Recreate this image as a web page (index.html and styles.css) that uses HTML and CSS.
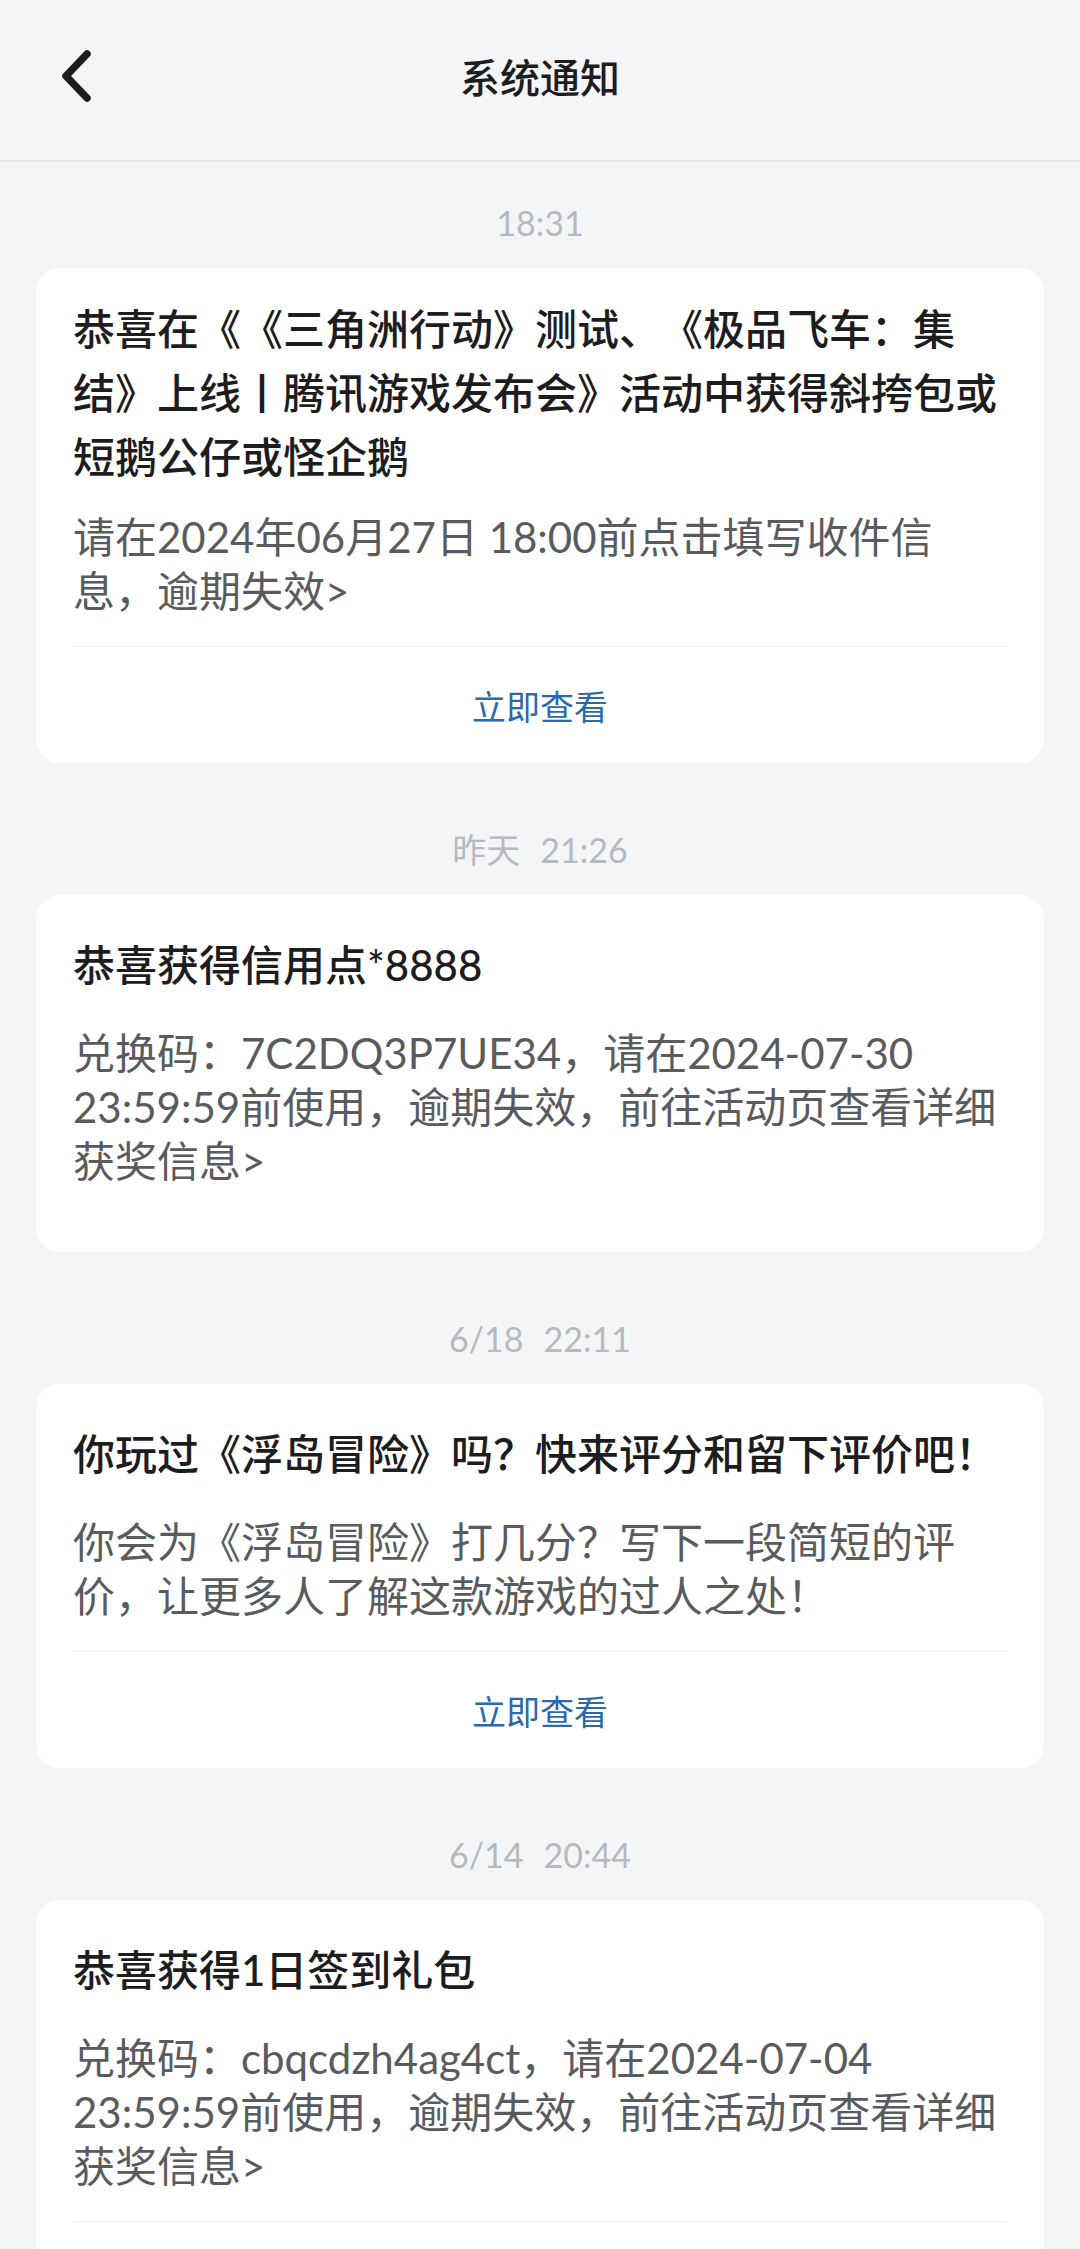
FILE: index.html
```html
<!DOCTYPE html>
<html lang="zh-CN">
<head>
<meta charset="utf-8">
<title>系统通知</title>
<link rel="stylesheet" href="styles.css">
</head>
<body>
<header class="nav">
  <div class="nav-side">
    <svg class="back" width="40" height="60" viewBox="0 0 40 60" aria-hidden="true">
      <path d="M31 8 L10 30 L31 52" fill="none" stroke="#1c1c1e" stroke-width="7.5" stroke-linecap="round" stroke-linejoin="round"/>
    </svg>
  </div>
  <h1 class="nav-title">系统通知</h1>
  <div class="nav-side"></div>
</header>

<main class="list">
  <section class="group">
    <div class="time"><span>18:31</span></div>
    <article class="card card--tight">
      <h2 class="card-title">恭喜在《《三角洲行动》测试、《极品飞车：集结》上线丨腾讯游戏发布会》活动中获得斜挎包或短鹅公仔或怪企鹅</h2>
      <p class="card-text">请在2024年06月27日 18:00前点击填写收件信息，逾期失效&gt;</p>
      <div class="card-action">立即查看</div>
    </article>
  </section>

  <section class="group">
    <div class="time"><span>昨天</span><span>21:26</span></div>
    <article class="card card--plain">
      <h2 class="card-title">恭喜获得信用点*8888</h2>
      <p class="card-text">兑换码：7C2DQ3P7UE34，请在2024-07-30 23:59:59前使用，逾期失效，前往活动页查看详细获奖信息&gt;</p>
    </article>
  </section>

  <section class="group">
    <div class="time"><span>6/18</span><span>22:11</span></div>
    <article class="card">
      <h2 class="card-title">你玩过《浮岛冒险》吗？快来评分和留下评价吧！</h2>
      <p class="card-text">你会为《浮岛冒险》打几分？写下一段简短的评价，让更多人了解这款游戏的过人之处！</p>
      <div class="card-action">立即查看</div>
    </article>
  </section>

  <section class="group">
    <div class="time"><span>6/14</span><span>20:44</span></div>
    <article class="card">
      <h2 class="card-title">恭喜获得1日签到礼包</h2>
      <p class="card-text">兑换码：cbqcdzh4ag4ct，请在2024-07-04 23:59:59前使用，逾期失效，前往活动页查看详细获奖信息&gt;</p>
      <div class="card-action">立即查看</div>
    </article>
  </section>
</main>
</body>
</html>
```

FILE: styles.css
```css
* {
  box-sizing: border-box;
}

html, body {
  margin: 0;
  padding: 0;
}

body {
  background: #f4f5f7;
  font-family: "Lato", "Noto Sans CJK SC", sans-serif;
  color: #1d1d1f;
  min-height: 2249px;
  text-spacing-trim: space-all;
}

.nav {
  display: grid;
  grid-template-columns: 1fr auto 1fr;
  align-items: center;
  height: 162px;
  padding-bottom: 8px;
  border-bottom: 2px solid #e4e5e8;
  background: #f4f5f7;
}

.nav-side {
  display: flex;
  align-items: center;
}

.back {
  display: block;
  margin-left: 56px;
}

.nav-title {
  margin: 0;
  font-family: "Noto Sans CJK SC", sans-serif;
  font-size: 40px;
  font-weight: 500;
  line-height: 56px;
  color: #1d1d1f;
}

.list {
  padding: 36px 36px 0;
  display: flex;
  flex-direction: column;
  gap: 62px;
}

.group {
  display: flex;
  flex-direction: column;
  gap: 20px;
}

.time {
  display: flex;
  justify-content: center;
  gap: 20px;
  height: 50px;
  line-height: 50px;
  font-size: 34px;
  color: #b6b9c0;
}

.card {
  background: #ffffff;
  border-radius: 24px;
  padding: 38px 37px 0;
}

.card--tight {
  padding-top: 29px;
}

.card--plain {
  padding-bottom: 36px;
}

.card-title {
  margin: 0;
  font-size: 42px;
  font-weight: 500;
  line-height: 64px;
  color: #1d1d1f;
}

.card-text {
  margin: 29px 0 28px;
  font-size: 42px;
  line-height: 54px;
  color: #595b5e;
}

.card--tight .card-text {
  margin-top: 21px;
}

.card-action {
  border-top: 1px solid #eeeff1;
  height: 117px;
  display: flex;
  align-items: center;
  justify-content: center;
  font-size: 34px;
  color: #2b69aa;
}
```
